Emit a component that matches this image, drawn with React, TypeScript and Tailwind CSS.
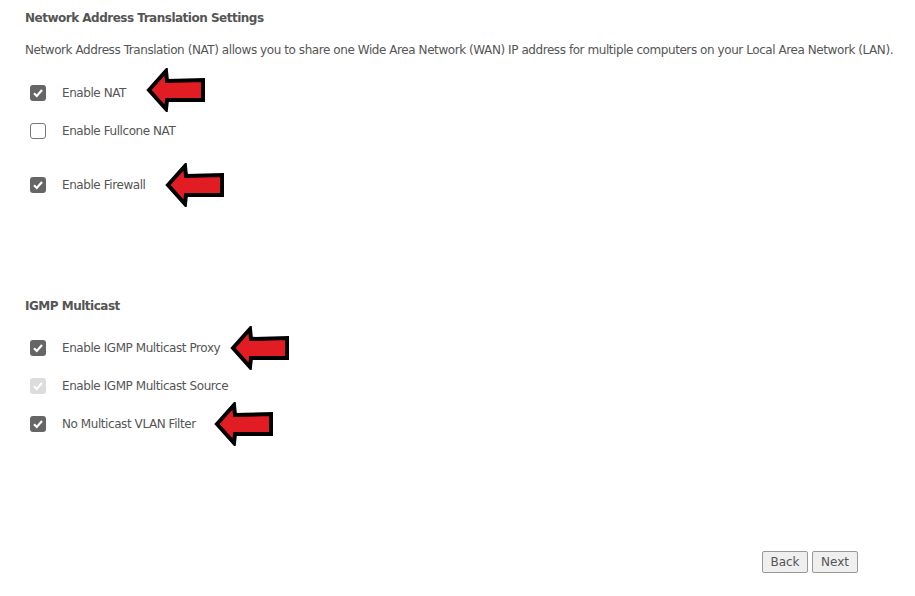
import React from "react";

const font = { fontFamily: "Tahoma, 'DejaVu Sans', sans-serif" };

function Arrow({ className }: { className?: string }) {
    return (
        <svg width="60" height="44" viewBox="0 0 60 44" className={className}>
            <polygon
                points="3,22 20,3 21,13 57,12 57,32 21,32 20,41"
                fill="#e21c23"
                stroke="#000"
                strokeWidth="4"
                strokeLinejoin="miter"
            />
        </svg>
    );
}

function Box({ state }: { state: "on" | "off" | "disabled" }) {
    if (state === "off") {
        return <span className="w-4 h-4 rounded-[3px] border border-[#777] bg-white shrink-0" />;
    }
    const bg = state === "on" ? "bg-[#666]" : "bg-[#dcdcdc]";
    return (
        <span className={`w-4 h-4 rounded-[3px] ${bg} shrink-0 flex items-center justify-center`}>
            <svg width="12" height="12" viewBox="0 0 12 12">
                <path d="M2 6.2 L4.8 9 L10 3" fill="none" stroke="#fff" strokeWidth="2.2" />
            </svg>
        </span>
    );
}

function Row({ label, state, arrow, className }: { label: string; state: "on" | "off" | "disabled"; arrow?: string; className?: string }) {
    return (
        <div className={`flex items-center h-[38px] pl-[5px] ${className ?? ""}`}>
            <Box state={state} />
            <span className="ml-4 text-[12px] tracking-[-0.43px] text-[#555] whitespace-nowrap">{label}</span>
            {arrow && <Arrow className={arrow} />}
        </div>
    );
}

export default function App() {
    return (
        <div className="w-[915px] h-[596px] bg-white pt-[10px] px-[25px] flex flex-col" style={font}>
            <p className="text-[12px] leading-4 font-bold tracking-[-0.5px] text-[#555]">Network Address Translation Settings</p>
            <p className="mt-4 text-[12px] leading-4 tracking-[-0.43px] text-[#555] whitespace-nowrap">
                Network Address Translation (NAT) allows you to share one Wide Area Network (WAN) IP address for multiple computers on your Local Area Network (LAN).
            </p>
            <Row className="mt-4" label="Enable NAT" state="on" arrow="ml-[20px] -mt-[6px] shrink-0" />
            <Row label="Enable Fullcone NAT" state="off" />
            <Row className="mt-4" label="Enable Firewall" state="on" arrow="ml-[19px] shrink-0" />

            <p className="mt-[94px] text-[12px] leading-4 font-bold tracking-[-0.5px] text-[#555]">IGMP Multicast</p>
            <Row className="mt-[15px]" label="Enable IGMP Multicast Proxy" state="on" arrow="ml-[10px] shrink-0" />
            <Row label="Enable IGMP Multicast Source" state="disabled" />
            <Row label="No Multicast VLAN Filter" state="on" arrow="ml-[18px] shrink-0" />

            <div className="mt-[108px] flex justify-end gap-1 pr-[32px]">
                <button className="w-[46px] h-[22px] border border-[#999] rounded-[2px] bg-[#efefef] text-[12px] text-[#555]">Back</button>
                <button className="w-[46px] h-[22px] border border-[#999] rounded-[2px] bg-[#efefef] text-[12px] text-[#555]">Next</button>
            </div>
        </div>
    );
}
